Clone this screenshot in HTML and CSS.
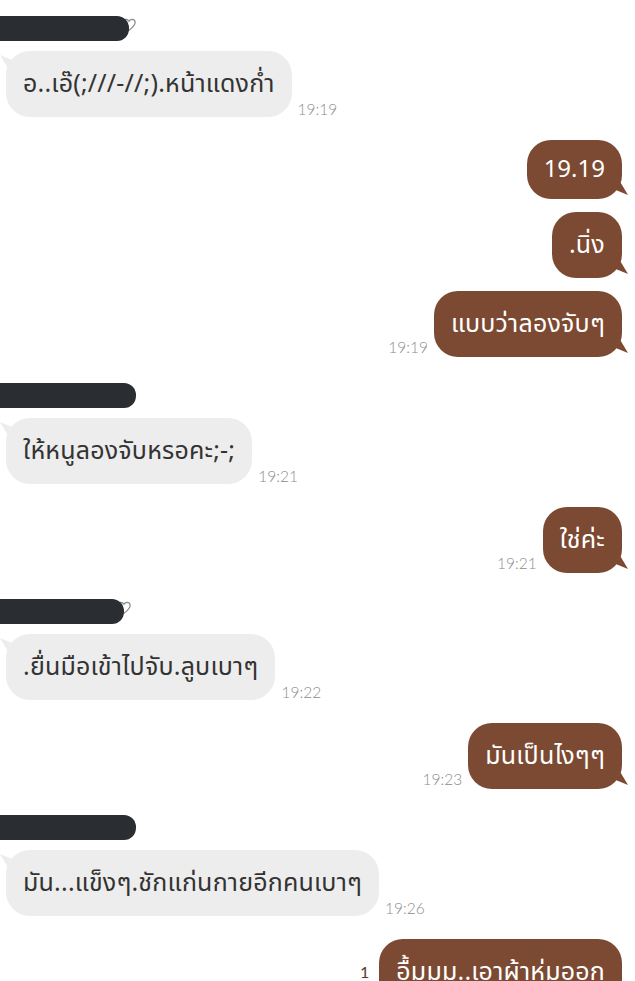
FILE: index.html
```html
<!DOCTYPE html>
<html lang="th">
<head>
    <meta charset="UTF-8">
    <meta name="viewport" content="width=device-width, initial-scale=1.0">
    <title>Chat</title>
    <link rel="stylesheet" href="styles.css">
</head>
<body>
    <div class="chat">
        <div class="sender">
            <span class="name-bar w130"></span>
            <svg class="heart" viewBox="0 0 16 16"><path d="M8 14 C3 10 1 7.5 1 5 C1 3 2.6 1.5 4.5 1.5 C6 1.5 7.3 2.5 8 3.8 C8.7 2.5 10 1.5 11.5 1.5 C13.4 1.5 15 3 15 5 C15 7.5 13 10 8 14 Z"/></svg>
        </div>
        <div class="row in">
            <div class="bubble">อ..เอ๊(;///-//;).หน้าแดงก่ำ</div>
            <span class="time">19:19</span>
        </div>

        <div class="row out gap-big">
            <div class="bubble short">19.19</div>
        </div>
        <div class="row out">
            <div class="bubble">.นิ่ง</div>
        </div>
        <div class="row out">
            <span class="time">19:19</span>
            <div class="bubble">แบบว่าลองจับๆ</div>
        </div>

        <div class="sender gap-name"><span class="name-bar w136"></span></div>
        <div class="row in">
            <div class="bubble">ให้หนูลองจับหรอคะ;-;</div>
            <span class="time">19:21</span>
        </div>

        <div class="row out gap-big">
            <span class="time">19:21</span>
            <div class="bubble">ใช่ค่ะ</div>
        </div>

        <div class="sender gap-name">
            <span class="name-bar w120"></span>
            <svg class="heart" viewBox="0 0 16 16"><path d="M8 14 C3 10 1 7.5 1 5 C1 3 2.6 1.5 4.5 1.5 C6 1.5 7.3 2.5 8 3.8 C8.7 2.5 10 1.5 11.5 1.5 C13.4 1.5 15 3 15 5 C15 7.5 13 10 8 14 Z"/></svg>
        </div>
        <div class="row in">
            <div class="bubble">.ยื่นมือเข้าไปจับ.ลูบเบาๆ</div>
            <span class="time">19:22</span>
        </div>

        <div class="row out gap-big">
            <span class="time">19:23</span>
            <div class="bubble">มันเป็นไงๆๆ</div>
        </div>

        <div class="sender gap-name"><span class="name-bar w136"></span></div>
        <div class="row in">
            <div class="bubble">มัน...แข็งๆ.ชักแก่นกายอีกคนเบาๆ</div>
            <span class="time">19:26</span>
        </div>

        <div class="row out gap-big">
            <span class="read">1</span>
            <div class="bubble">อื้มมม..เอาผ้าห่มออก</div>
        </div>
    </div>
</body>
</html>
```

FILE: styles.css
```css
html, body {
    margin: 0;
    height: 100%;
    overflow: hidden;
    background: #ffffff;
}
body {
    font-family: "Noto Sans Thai", "Noto Sans", "Loma", "Garuda", sans-serif;
    color: #333;
}
.chat {
    display: flex;
    flex-direction: column;
    padding-top: 16px;
}
.sender {
    display: flex;
    align-items: center;
    height: 25px;
    margin-bottom: 10px;
}
.gap-name {
    margin-top: 26px;
}
.name-bar {
    position: relative;
    z-index: 1;
    display: block;
    height: 25px;
    background: #2a2d31;
    border-radius: 0 12px 12px 0;
}
.w120 { width: 124px; }
.w130 { width: 129px; }
.w136 { width: 136px; }
.heart {
    width: 14px;
    height: 14px;
    margin-left: -7px;
    margin-top: -8px;
    fill: none;
    stroke: #8a8a8a;
    stroke-width: 1.4;
}
.row {
    display: flex;
    align-items: flex-end;
    gap: 6px;
    margin-top: 13px;
}
.sender + .row {
    margin-top: 0;
}
.gap-big {
    margin-top: 23px;
}
.row.in {
    padding-left: 6px;
}
.row.out {
    justify-content: flex-end;
    padding-right: 13px;
}
.bubble {
    position: relative;
    height: 66px;
    box-sizing: border-box;
    display: flex;
    align-items: center;
    padding: 0 17px;
    border-radius: 24px;
    font-size: 25px;
    letter-spacing: 0.2px;
    white-space: nowrap;
}
.bubble.short {
    height: 59px;
    font-size: 24px;
    letter-spacing: 0;
}
.in .bubble {
    background: #ededed;
    color: #333;
}
.out .bubble {
    background: #7c4a32;
    color: #fff;
}
.in .bubble::before {
    content: "";
    position: absolute;
    left: -6px;
    top: 4px;
    width: 16px;
    height: 16px;
    background: #ededed;
    clip-path: polygon(0 0, 100% 40%, 60% 100%);
}
.out .bubble::after {
    content: "";
    position: absolute;
    right: -6px;
    bottom: 4px;
    width: 16px;
    height: 16px;
    background: #7c4a32;
    clip-path: polygon(100% 100%, 0 60%, 40% 0);
}
.time {
    font-family: "Lato", "Liberation Sans", sans-serif;
    font-weight: 300;
    font-size: 15.5px;
    color: #8c8c8c;
    margin-bottom: 1px;
}
.in .time {
    margin-bottom: -1px;
}
.read {
    font-family: "Lato", "Liberation Sans", sans-serif;
    font-size: 16px;
    color: #5a3a2c;
    margin-right: 4px;
    margin-bottom: 24px;
}
```
